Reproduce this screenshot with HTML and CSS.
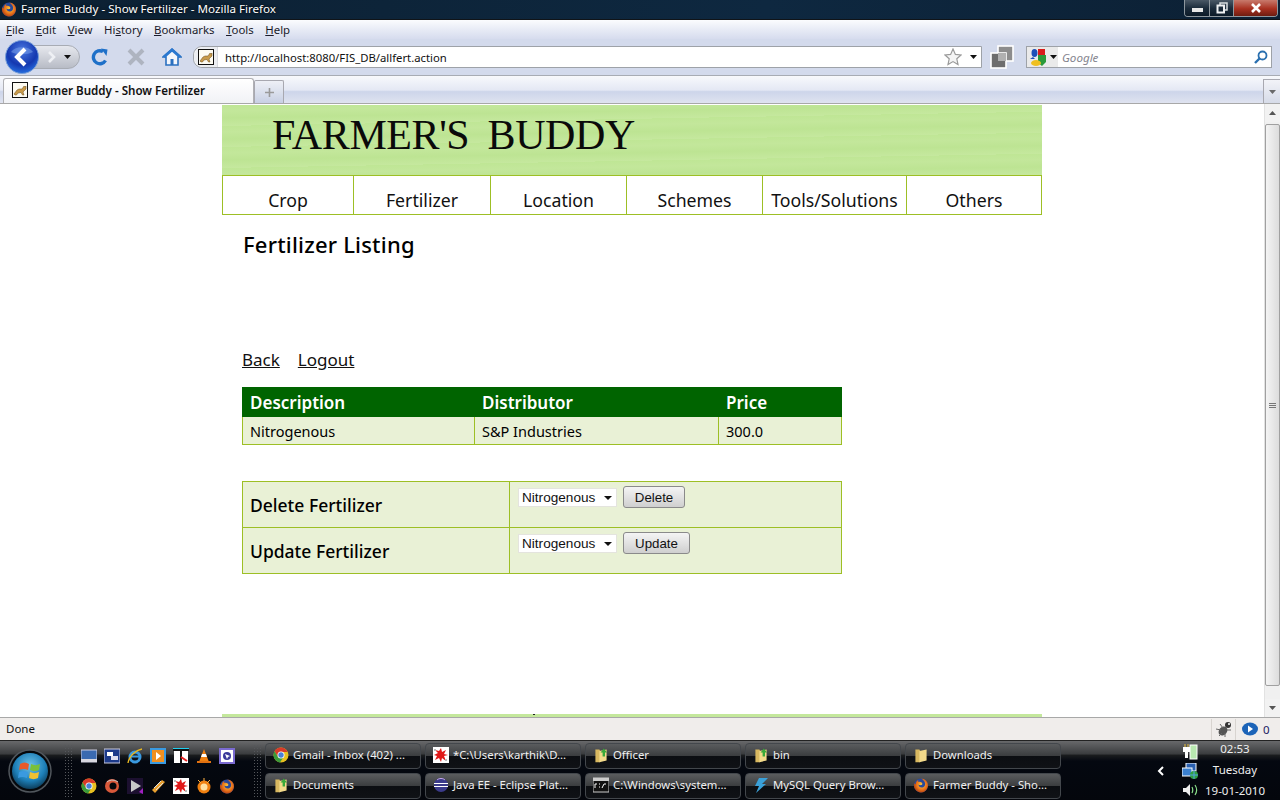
FILE: index.html
```html
<!DOCTYPE html>
<html lang="en">
<head>
<meta charset="utf-8">
<title>Farmer Buddy - Show Fertilizer - Mozilla Firefox</title>
<link rel="stylesheet" href="styles.css">
</head>
<body>
<svg class="defs" width="0" height="0">
  <defs>
    <radialGradient id="fx" cx=".55" cy=".45" r=".6"><stop offset="0" stop-color="#ffd23c"/><stop offset=".6" stop-color="#e8701a"/><stop offset="1" stop-color="#a83a10"/></radialGradient>
    <radialGradient id="orb" cx=".5" cy=".35" r=".7"><stop offset="0" stop-color="#6fc2e8"/><stop offset=".6" stop-color="#1d7fb8"/><stop offset="1" stop-color="#0a3048"/></radialGradient>
    <radialGradient id="backg" cx=".5" cy=".3" r=".75"><stop offset="0" stop-color="#4a78e0"/><stop offset=".6" stop-color="#1438b0"/><stop offset="1" stop-color="#2a78e8"/></radialGradient>
    <symbol id="i-fx" viewBox="0 0 16 16"><circle cx="8" cy="8.5" r="7" fill="#2a4a9a"/><path d="M8 1.5a7 7 0 1 1-6.6 4.6c.3 1 .8 1.3 1.2 1.5C2.600 5 4 3.200 5.500 3c-.5.800-.5 1.500 0 2 1.500-.5 3.500 0 4 2-1 1.500-3 1.500-4 .5 0 2 2 3.500 4 3 2-.5 3-2.500 2.500-4.500C11.500 4 10 2.500 8 1.500z" fill="url(#fx)"/></symbol>
    <symbol id="i-cat" viewBox="0 0 16 16"><rect x=".5" y=".5" width="15" height="15" fill="#fdfbf2" stroke="#111"/><path d="M2 12l3-4 2-1 3 0 2-3 1 1 1-1v3l-2 2-1 1 1 3h-1.500L9 10.500 6 11l-1.500 2H3z" fill="#c89a4a" stroke="#6a4a1a" stroke-width=".5"/></symbol>
    <symbol id="i-folder" viewBox="0 0 16 20"><path d="M1 3h5l1 2v14H1z" fill="#d8b860"/><path d="M6 5l9-2v14l-9 2z" fill="#f2d98a"/><path d="M10 12V7H7.500l4-5 4 5H13v5z" fill="#3aa83a"/></symbol>
    <symbol id="i-folder-plain" viewBox="0 0 16 20"><path d="M1 3h5l1 2v14H1z" fill="#d8b860"/><path d="M6 5l9-2v14l-9 2z" fill="#f2d98a"/></symbol>
    <symbol id="i-chrome" viewBox="0 0 16 16"><circle cx="8" cy="8" r="7.500" fill="#e8c020"/><path d="M8 .5A7.500 7.500 0 0 0 1.500 4.200L5 10 8 5h6.500A7.500 7.500 0 0 0 8 .5z" fill="#d83a2a"/><path d="M1.500 4.200A7.500 7.500 0 0 0 7 15.400L10.500 10H5z" fill="#3a9a3a"/><circle cx="8" cy="8" r="3.500" fill="#fff"/><circle cx="8" cy="8" r="2.700" fill="#4a80d8"/></symbol>
    <symbol id="i-splat" viewBox="0 0 16 16"><rect width="16" height="16" fill="#fff"/><path d="M8 1l1 4 4-2-2 4 4 1-4 1 2 5-4-3-1 4-2-4-4 2 2-4-3-1 4-2-3-3 4 1z" fill="#e01818"/><rect x="1" y="2" width="2" height="2" fill="#bbb"/><rect x="12" y="12" width="2" height="2" fill="#bbb"/></symbol>
  </defs>
</svg>

<div class="app">
  <header class="titlebar">
    <svg class="ico16 title-ico"><use href="#i-fx"/></svg>
    <span class="title-text">Farmer Buddy - Show Fertilizer - Mozilla Firefox</span>
    <div class="winctl">
      <span class="wc wc-min"><i></i></span>
      <span class="wc wc-max"><svg width="12" height="12" viewBox="0 0 12 12"><path d="M4 3V1h7v7H8.500" fill="none" stroke="#d8dde0" stroke-width="1.500"/><rect x="1.500" y="3.500" width="6.500" height="7" fill="none" stroke="#eef0f2" stroke-width="2"/></svg></span>
      <span class="wc wc-close">
        <svg width="12" height="10" viewBox="0 0 12 10"><path d="M2 1l8 8M10 1l-8 8" stroke="#fff" stroke-width="2.600"/></svg>
      </span>
    </div>
  </header>

  <nav class="menubar">
    <span><u>F</u>ile</span><span><u>E</u>dit</span><span><u>V</u>iew</span><span>Hi<u>s</u>tory</span><span><u>B</u>ookmarks</span><span><u>T</u>ools</span><span><u>H</u>elp</span>
  </nav>

  <div class="navbar">
    <div class="backfwd">
      <span class="fwd">
        <svg width="14" height="14" viewBox="0 0 14 14"><path d="M4 2l5 5-5 5" fill="none" stroke="#eef0f4" stroke-width="2.600"/></svg>
        <svg class="caret-sm" width="7" height="4" viewBox="0 0 7 4"><path d="M0 0h7L3.500 4z" fill="#111"/></svg>
      </span>
      <svg class="back" width="34" height="34" viewBox="0 0 34 34">
        <circle cx="17" cy="17" r="16.500" fill="url(#backg)" stroke="#7aa0d8"/>
        <path d="M6 12a12 8 0 0 1 22 0c-6 3-16 3-22 0z" fill="#8ab0f0" opacity=".45"/>
        <path d="M20 9l-8 8 8 8" fill="none" stroke="#fff" stroke-width="4"/>
      </svg>
    </div>
    <svg class="tool-reload" width="18" height="18" viewBox="0 0 18 18"><path d="M14.500 12.500A6.500 6.500 0 1 1 12 3.500" fill="none" stroke="#1e70c8" stroke-width="3.400"/><path d="M10 .5l6.500 1-1 6.500z" fill="#1e70c8"/></svg>
    <svg class="tool-stop" width="18" height="18" viewBox="0 0 18 18"><path d="M2 2l14 14M16 2L2 16" stroke="#aeb4c0" stroke-width="4"/></svg>
    <svg class="tool-home" width="20" height="18" viewBox="0 0 20 18"><path d="M10 1L1 9h3v8h12V9h3z" fill="#f4f6fb" stroke="#2a70c0" stroke-width="1.600"/><path d="M2 9l8-7 8 7" fill="none" stroke="#2a78d0" stroke-width="2.600"/><rect x="8.500" y="11" width="3" height="6" fill="#2a70c0"/></svg>
    <div class="urlbar">
      <span class="url-fav"><svg class="ico16"><use href="#i-cat"/></svg></span>
      <span class="url-text">http://localhost:8080/FIS_DB/allfert.action</span>
      <svg class="star" width="18" height="18" viewBox="0 0 18 18"><path d="M9 1l2.400 5.400 5.600.6-4.200 3.800 1.200 5.700L9 13.600l-5 2.900 1.200-5.700L1 7l5.600-.6z" fill="#f4f4f4" stroke="#9a9a9a" stroke-width="1.200"/></svg>
      <svg class="url-caret" width="7" height="4" viewBox="0 0 7 4"><path d="M0 0h7L3.500 4z" fill="#111"/></svg>
    </div>
    <svg class="copyicon" width="24" height="24" viewBox="0 0 24 24"><rect x="8" y="1" width="15" height="15" fill="#8c8c8c" stroke="#fff" stroke-width="1.600"/><rect x="1" y="8" width="15" height="15" fill="#6e6e6e" stroke="#fff" stroke-width="1.600"/><rect x="8" y="8" width="8" height="8" fill="#b0b0b0"/></svg>
    <div class="searchbar">
      <span class="engine">
        <svg width="17" height="17" viewBox="0 0 17 17"><rect x="8" y="0" width="7" height="6" fill="#d81c1c"/><path d="M8 6h8v7l-4 4-4-3z" fill="#2a9a3a"/><ellipse cx="4.500" cy="4" rx="3" ry="4" fill="#1c50b8"/><ellipse cx="6" cy="14" rx="5" ry="3" fill="#f0c020"/><path d="M0 10l3-2 2 2z" fill="#1c50b8"/></svg>
        <svg width="7" height="4" viewBox="0 0 7 4"><path d="M0 0h7L3.500 4z" fill="#111"/></svg>
      </span>
      <span class="search-text">Google</span>
      <svg class="lens" width="14" height="14" viewBox="0 0 14 14"><circle cx="8.500" cy="5.500" r="4" fill="none" stroke="#2a70b0" stroke-width="1.800"/><path d="M5.500 8.500L1 13" stroke="#2a70b0" stroke-width="2.400"/></svg>
    </div>
  </div>

  <div class="tabbar">
    <div class="tab">
      <svg class="ico16"><use href="#i-cat"/></svg>
      <span>Farmer Buddy - Show Fertilizer</span>
    </div>
    <div class="newtab">
      <svg width="9" height="9" viewBox="0 0 9 9"><path d="M4.500 0v9M0 4.500h9" stroke="#9a9a9a" stroke-width="1.600"/></svg>
    </div>
    <div class="tabspace"></div>
    <div class="tabdrop"><svg width="7" height="4" viewBox="0 0 7 4"><path d="M0 0h7L3.500 4z" fill="#6a6a6a"/></svg></div>
  </div>

  <div class="viewport">
    <main class="page">
      <div class="banner"><span class="brand">Farmer's&nbsp; Buddy</span></div>
      <ul class="sitenav">
        <li class="n1">Crop</li><li class="n2">Fertilizer</li><li class="n3">Location</li><li class="n4">Schemes</li><li class="n5">Tools/Solutions</li><li class="n6">Others</li>
      </ul>
      <div class="content">
        <h1>Fertilizer Listing</h1>
        <p class="links"><a href="#">Back</a><a href="#">Logout</a></p>
        <table class="listing">
          <thead><tr><th class="c1">Description</th><th class="c2">Distributor</th><th>Price</th></tr></thead>
          <tbody><tr><td>Nitrogenous</td><td>S&amp;P Industries</td><td>300.0</td></tr></tbody>
        </table>
        <table class="actions">
          <tr>
            <th>Delete Fertilizer</th>
            <td><div class="formrow"><span class="selwrap"><select><option>Nitrogenous</option></select></span><button type="button" class="btn-del">Delete</button></div></td>
          </tr>
          <tr>
            <th>Update Fertilizer</th>
            <td><div class="formrow"><span class="selwrap"><select><option>Nitrogenous</option></select></span><button type="button" class="btn-upd">Update</button></div></td>
          </tr>
        </table>
      </div>
      <div class="pagefoot"><i></i></div>
    </main>
    <div class="scrollbar">
      <div class="sb-end"><svg width="7" height="4" viewBox="0 0 7 4"><path d="M0 4h7L3.500 0z" fill="#555"/></svg></div>
      <div class="sb-thumb"><i></i><i></i><i></i></div>
      <div class="sb-end"><svg width="7" height="4" viewBox="0 0 7 4"><path d="M0 0h7L3.500 4z" fill="#555"/></svg></div>
    </div>
  </div>

  <footer class="statusbar">
    <span class="status-text">Done</span>
    <div class="st-cell st-bug">
      <svg width="18" height="18" viewBox="0 0 18 18"><ellipse cx="8" cy="11" rx="4" ry="5" fill="#555" transform="rotate(40 8 11)"/><circle cx="13" cy="5" r="3" fill="#333"/><circle cx="14" cy="4" r="1" fill="#fff"/><path d="M1 9l5 1M4 16l3-3M10 17l0-4M5 4l3 4M16 10l-4 0" stroke="#666"/></svg>
    </div>
    <div class="st-cell st-count">
      <svg width="16" height="16" viewBox="0 0 16 16"><ellipse cx="8" cy="8" rx="8" ry="6.500" fill="#1c64b8"/><path d="M6 4.500l5 3.500-5 3.500z" fill="#fff"/></svg>
      <span>0</span>
    </div>
  </footer>

  <div class="taskbar">
    <div class="startwrap">
      <svg width="44" height="44" viewBox="0 0 44 44">
        <circle cx="22" cy="22" r="21" fill="#05080c" stroke="#50565c" stroke-width="1.500"/>
        <circle cx="22" cy="22" r="18" fill="url(#orb)"/>
        <path d="M12 15c3-2 6-2 9 0l-1 6c-3-1.500-6-1.500-9 0z" fill="#e85a2a"/>
        <path d="M23 15c3 1.500 6 1.500 9 0l-1 6c-3 1.500-6 1.500-9 0z" fill="#7ac03a"/>
        <path d="M11 23c3-1.500 6-1.500 9 0l-1 6c-3-1.500-6-1.500-9 0z" fill="#3a9ae0"/>
        <path d="M22 23c3 1.500 6 1.500 9 0l-1 6c-3 1.500-6 1.500-9 0z" fill="#f0c030"/>
      </svg>
    </div>
    <span class="grip"></span>
    <div class="quick">
      <svg class="q" viewBox="0 0 16 16"><rect y="2" width="16" height="12" fill="#3a6ab0" stroke="#ccd"/><rect y="11" width="16" height="3" fill="#d8d8e0"/></svg>
      <svg class="q" viewBox="0 0 16 16"><rect y="1" width="16" height="14" fill="#1c3a8a" stroke="#ccd"/><rect x="3" y="4" width="6" height="4" fill="#fff"/><rect x="7" y="8" width="7" height="4" fill="#dde"/></svg>
      <svg class="q" viewBox="0 0 16 16"><circle cx="8" cy="9" r="5" fill="none" stroke="#3a9ae0" stroke-width="3"/><path d="M4 8.500h9" stroke="#3a9ae0" stroke-width="2"/><path d="M1 15C2 8 9 2 15 1" fill="none" stroke="#e8b820" stroke-width="1.400"/></svg>
      <svg class="q" viewBox="0 0 16 16"><rect width="16" height="16" fill="#3a9ae0"/><rect x="2" y="2" width="12" height="12" fill="#f09020"/><path d="M6 4l5 4-5 4z" fill="#fff"/></svg>
      <svg class="q" viewBox="0 0 16 16"><rect x="1" y="1" width="14" height="14" fill="#fff"/><path d="M0 2h16M8 1v14" stroke="#111" stroke-width="2"/><path d="M0 .5h16" stroke="#20d0f0"/><path d="M8 9l6 4" stroke="#e82020" stroke-width="2"/></svg>
      <svg class="q" viewBox="0 0 16 16"><path d="M8 1l5 13H3z" fill="#f08010"/><path d="M6 6h4l1 3H5z" fill="#fff"/><rect x="1" y="13" width="14" height="2" fill="#e07010"/></svg>
      <svg class="q" viewBox="0 0 16 16"><rect width="16" height="16" fill="#7a6ad0"/><rect x="2" y="2" width="12" height="12" fill="#fff"/><circle cx="8" cy="8" r="4" fill="#3a3a9a"/><path d="M6 6l5 2-2 1-1 2z" fill="#fff"/></svg>
      <svg class="q"><use href="#i-chrome"/></svg>
      <svg class="q" viewBox="0 0 16 16"><circle cx="8" cy="8" r="7" fill="#d8583a"/><circle cx="9" cy="8" r="3.500" fill="#05080c"/><path d="M3 4c4-3 8-2 11 0" stroke="#c8c8c8" fill="none"/></svg>
      <svg class="q" viewBox="0 0 16 16"><rect width="16" height="16" fill="#1c1030"/><path d="M4 2l10 6-10 6z" fill="#c8c8c8"/><path d="M12 14l4-4v6z" fill="#a020c0"/></svg>
      <svg class="q" viewBox="0 0 16 16"><path d="M2 12L12 2l3 2L5 15z" fill="#e8a030"/><path d="M4 10l7-7M6 12l7-7" stroke="#ddd"/></svg>
      <svg class="q"><use href="#i-splat"/></svg>
      <svg class="q" viewBox="0 0 16 16"><circle cx="8" cy="9" r="6.500" fill="#f08010"/><circle cx="8" cy="9" r="3.500" fill="#ffe0a0"/><path d="M2 2l3 3M8 0v3M14 2l-3 3" stroke="#ffb040"/></svg>
      <svg class="q"><use href="#i-fx"/></svg>
    </div>
    <span class="grip"></span>
    <div class="tasks">
      <div class="task"><svg class="ico16"><use href="#i-chrome"/></svg><span>Gmail - Inbox (402) ...</span></div>
      <div class="task"><svg class="ico16"><use href="#i-splat"/></svg><span>*C:\Users\karthik\D...</span></div>
      <div class="task"><svg class="ico16"><use href="#i-folder"/></svg><span>Officer</span></div>
      <div class="task"><svg class="ico16"><use href="#i-folder"/></svg><span>bin</span></div>
      <div class="task"><svg class="ico16"><use href="#i-folder-plain"/></svg><span>Downloads</span></div>
      <div class="task"><svg class="ico16"><use href="#i-folder"/></svg><span>Documents</span></div>
      <div class="task"><svg class="ico16" viewBox="0 0 16 16"><circle cx="8" cy="8" r="7" fill="#3a3a8a"/><path d="M1 6.500h14M1 9.500h14" stroke="#fff" stroke-width="1.200"/><path d="M4 3c2-2 6-2 8 0" stroke="#c8a8e8" fill="none"/></svg><span>Java EE - Eclipse Plat...</span></div>
      <div class="task"><svg class="ico16" viewBox="0 0 16 16"><rect y="1" width="16" height="14" fill="#111" stroke="#ccc"/><rect y="1" width="16" height="3" fill="#ccc"/><path d="M2 11V7h2M6 7h1M6 10h1M9 11l2-4h2" stroke="#fff"/></svg><span>C:\Windows\system...</span></div>
      <div class="task"><svg class="ico16" viewBox="0 0 16 16"><path d="M6 1h9L9 7h4L3 16l3-7H2z" fill="#3aa0d8"/></svg><span>MySQL Query Brow...</span></div>
      <div class="task"><svg class="ico16"><use href="#i-fx"/></svg><span>Farmer Buddy - Sho...</span></div>
    </div>
    <div class="tray">
      <svg class="tray-chev" width="8" height="10" viewBox="0 0 8 10"><path d="M6 1L2 5l4 4" fill="none" stroke="#fff" stroke-width="2"/></svg>
      <div class="tray-icons">
        <svg width="16" height="16" viewBox="0 0 16 16"><rect x="8" y="1" width="7" height="14" fill="#b8e8b0" stroke="#fff"/><path d="M1 3h7v5H6v6H3V8H1z" fill="#fff"/><path d="M3 0v3M6 0v3" stroke="#e8c040"/></svg>
        <svg width="16" height="16" viewBox="0 0 16 16"><rect x="4" y="0" width="10" height="8" fill="#2a60b0" stroke="#fff"/><rect x="0" y="5" width="10" height="8" fill="#3a80d0" stroke="#fff"/><circle cx="12" cy="12" r="4" fill="#30a040"/><path d="M8 12h8M12 8v8" stroke="#50a0e0"/></svg>
        <svg width="16" height="16" viewBox="0 0 16 16"><path d="M1 6h3l4-4v12l-4-4H1z" fill="#eee"/><path d="M10 5c1 2 1 4 0 6M13 3c2 3 2 7 0 10" fill="none" stroke="#8ae08a" stroke-width="1.200"/></svg>
      </div>
      <div class="clock"><span>02:53</span><span>Tuesday</span><span>19-01-2010</span></div>
    </div>
  </div>
</div>
</body>
</html>
```

FILE: styles.css
```css
* { box-sizing: border-box; }
html, body { margin: 0; height: 100%; overflow: hidden; }
body { font-family: "Noto Sans", "Open Sans", sans-serif; color: #000; background: #fff; }
.defs { position: absolute; }
.ico16 { width: 16px; height: 16px; flex: none; display: block; }

.app { width: 1280px; height: 800px; display: flex; flex-direction: column; }

/* window title */
.titlebar { height: 20px; display: flex; align-items: center; padding-left: 1px; padding-bottom: 2px; color: #fff; font-size: 11.6px; background: linear-gradient(90deg, #0c2032 0%, #0e2840 60%, #0c2034 100%); border-bottom: 1px solid #101418; }
.title-ico { margin-right: 4px; }
.title-text { text-shadow: 0 0 3px #000; }
.winctl { margin-left: auto; margin-right: 2px; height: 17px; align-self: flex-start; display: flex; border: 1px solid #8e979e; border-top: 0; border-radius: 0 0 4px 4px; overflow: hidden; }
.wc { display: flex; align-items: center; justify-content: center; height: 16px; background: linear-gradient(#4a5866, #1c2c3c 50%, #0c1a28); }
.wc-min { width: 25px; border-right: 1px solid #8e979e; }
.wc-min i { width: 11px; height: 4px; background: #e8e8e8; margin-top: 4px; }
.wc-max { width: 24px; border-right: 1px solid #8e979e; }
.wc-close { width: 43px; background: linear-gradient(#c87a6c, #a83020 55%, #6e1c10); }

/* menu */
.menubar { height: 19px; display: flex; align-items: center; padding-left: 6px; gap: 11.5px; font-size: 11.4px; color: #1a1a2a; background: linear-gradient(#fbfcfe, #e4e8f4 60%, #d6dcee); }
.menubar span { white-space: nowrap; }

/* nav toolbar */
.navbar { height: 37px; display: flex; align-items: center; padding-left: 5px; background: #d3daec; border-bottom: 1px solid #a8acb4; }
.backfwd { width: 75px; height: 32px; display: flex; align-items: center; position: relative; flex: none; }
.back { position: absolute; left: 0; top: -1px; }
.fwd { margin-left: 17px; width: 58px; height: 24px; border-radius: 0 12px 12px 0; background: linear-gradient(#e6e8ee, #b8bcc6); border: 1px solid #a8acb4; display: flex; align-items: center; padding-left: 22px; gap: 5px; }
.tool-reload { margin-left: 11px; flex: none; }
.tool-stop { margin-left: 18px; flex: none; }
.tool-home { margin-left: 17px; flex: none; }
.urlbar { margin-left: 11px; width: 789px; height: 22px; flex: none; display: flex; align-items: center; background: #fff; border: 1px solid #9ea2a8; border-radius: 9px 0 0 9px; }
.url-fav { width: 24px; height: 20px; display: flex; align-items: center; justify-content: center; background: #eceef2; border-right: 1px solid #d8dae0; border-radius: 9px 0 0 9px; margin-right: 7px; }
.url-text { font-size: 11.3px; color: #111; flex: 1; white-space: nowrap; }
.star { margin-right: 8px; }
.url-caret { margin-right: 4px; }
.copyicon { margin-left: 8px; flex: none; }
.searchbar { margin-left: 12px; width: 246px; height: 22px; flex: none; display: flex; align-items: center; background: #fff; border: 1px solid #9ea2a8; }
.engine { width: 31px; height: 20px; display: flex; align-items: center; gap: 3px; padding-left: 3px; background: #eaeaea; margin-right: 4px; flex: none; }
.search-text { flex: 1; font-size: 11.6px; font-style: italic; color: #85858f; }
.lens { margin-right: 3px; }

/* tabs */
.tabbar { height: 28px; display: flex; align-items: flex-end; padding-left: 3px; background: linear-gradient(#f8f9fc, #e4e8f4 52%, #cdd5ea 58%, #dfe3f0); border-bottom: 1px solid #a8a8a8; }
.tab { width: 251px; height: 25px; display: flex; align-items: center; gap: 4px; padding: 0 0 2px 8px; font-size: 11.6px; font-weight: 600; color: #111; background: linear-gradient(#fff, #f1f2f6); border: 1px solid #b0b0b4; border-bottom: 0; border-radius: 3px 3px 0 0; white-space: nowrap; }
.newtab { width: 30px; height: 23px; display: flex; align-items: center; justify-content: center; background: linear-gradient(#eef0f6, #c8d0e4); border: 1px solid #a8a8b0; border-bottom: 0; border-radius: 2px 2px 0 0; }
.tabspace { flex: 1; }
.tabdrop { width: 17px; height: 24px; display: flex; align-items: center; justify-content: center; background: linear-gradient(#f2f3f8, #d6dbe8); border: 1px solid #a8a8b0; border-width: 1px 0 0 1px; }

/* viewport */
.viewport { height: 614px; display: flex; background: #fff; border-bottom: 1px solid #a8a8a8; overflow: hidden; }
.page { flex: 1; display: flex; flex-direction: column; align-items: center; min-width: 0; padding-top: 1px; }
.banner { width: 820px; height: 70px; flex: none; padding: 5px 0 0 50px; background: repeating-linear-gradient(179deg, #bfe695 0, #c3e79b 6px, #bde493 13px, #c5e89e 21px); }
.brand { font-family: "Liberation Serif", serif; font-size: 42px; line-height: 50px; text-transform: uppercase; letter-spacing: -.4px; word-spacing: -1px; display: block; white-space: nowrap; color: #0a0a0a; }

.sitenav { width: 820px; height: 40px; flex: none; margin: 0; padding: 0; list-style: none; display: flex; border: 1px solid #9dbf25; font-size: 17.7px; }
.sitenav li { display: flex; align-items: flex-end; justify-content: center; padding-bottom: 2px; line-height: 24px; border-right: 1px solid #9dbf25; color: #111; flex: none; }
.sitenav li:last-child { border-right: 0; }
.n1 { width: 131px; } .n2 { width: 137px; } .n3 { width: 136px; } .n4 { width: 136px; } .n5 { width: 144px; } .n6 { width: 134px; }

.content { width: 820px; flex: 1; padding-left: 20px; }
h1 { margin: 14px 0 0 1px; font-size: 22px; line-height: 30px; font-weight: 500; letter-spacing: .2px; }
.links { margin: 88px 0 0; font-size: 17px; line-height: 26px; }
.links a { color: #111; margin-right: 18px; }

table { border-collapse: collapse; width: 600px; table-layout: fixed; }
.listing { margin-top: 14px; }
.listing th { background: #006400; color: #fff; text-align: left; height: 29px; padding: 0 7px; font-size: 17px; font-weight: 600; border: 1px solid #006400; }
.listing th.c1 { width: 232px; }
.listing th.c2 { width: 244px; }
.listing td { height: 28px; padding: 0 7px; font-size: 14.5px; background: #e9f1d6; border: 1px solid #9dbf25; }

.actions { margin-top: 36px; }
.actions th, .actions td { background: #e9f1d6; border: 1px solid #9dbf25; height: 46px; }
.actions th { width: 267px; text-align: left; padding: 0 7px; font-size: 17.5px; font-weight: 500; }
.actions td { padding: 0 8px; vertical-align: top; }
.formrow { display: flex; align-items: center; gap: 6px; padding-top: 4px; }
.selwrap { position: relative; display: block; width: 99px; height: 19px; background: #fff; border: 1px solid #e4e4de; }
.selwrap::after { content: ""; position: absolute; right: 4px; top: 7px; border: 4px solid transparent; border-top: 4px solid #111; border-bottom: 0; }
select { appearance: none; -webkit-appearance: none; width: 100%; height: 100%; border: 0; background: transparent; padding: 0 0 0 3px; font: 13.6px "Liberation Sans", Arial, sans-serif; color: #111; display: block; }
button { height: 22px; padding: 0; font: 13.3px "Liberation Sans", Arial, sans-serif; color: #111; background: linear-gradient(#f4f4f4, #e2e2e2 50%, #cfcfcf); border: 1px solid #8a8a8a; border-radius: 3px; }
.btn-del { width: 62px; }
.btn-upd { width: 67px; }

.pagefoot { width: 820px; height: 3px; flex: none; background: #c4e89c; position: relative; }
.pagefoot i { position: absolute; left: 311px; top: 0; width: 2px; height: 1px; background: #222; }

.scrollbar { width: 16px; flex: none; display: flex; flex-direction: column; background: #f0f0f0; border-left: 1px solid #e2e2e2; }
.sb-end { height: 18px; flex: none; display: flex; align-items: center; justify-content: center; background: #f2f2f2; }
.sb-thumb { margin-top: 2px; margin-bottom: 13px; flex: 1; display: flex; flex-direction: column; gap: 1px; align-items: center; justify-content: center; background: linear-gradient(90deg, #f4f4f4, #dcdcdc); border: 1px solid #a0a0a0; border-radius: 2px; }
.sb-thumb i { width: 7px; height: 1px; background: #777; }

/* status */
.statusbar { height: 22px; display: flex; align-items: center; font-size: 11.5px; color: #111; background: #f0edeb; }
.status-text { margin-left: 6px; flex: 1; padding-bottom: 2px; }
.st-cell { height: 21px; display: flex; align-items: center; border-left: 1px solid #d8d4d0; }
.st-bug { width: 24px; justify-content: center; }
.st-count { width: 45px; padding-left: 6px; gap: 5px; color: #1a1a60; }

/* taskbar */
.taskbar { height: 60px; display: flex; align-items: stretch; color: #eee; background: linear-gradient(#68696b 0, #3a3c3e 22%, #1a1c1e 24%, #040810 34%, #04060c 100%); border-top: 1px solid #222; }
.startwrap { width: 60px; display: flex; align-items: center; justify-content: center; flex: none; padding-top: 1px; }
.grip { width: 8px; margin: 3px 0 3px 4px; flex: none; background-image: radial-gradient(circle, #55575b 1px, transparent 1px); background-size: 3px 3px; }
.quick { width: 167px; margin-left: 5px; margin-right: 5px; flex: none; display: grid; grid-template-columns: repeat(7, 23px); grid-auto-rows: 30px; align-content: center; justify-items: center; align-items: center; }
.q { width: 16px; height: 16px; display: block; }
.tasks { margin-left: 4px; display: grid; grid-template-columns: repeat(5, 156px); grid-auto-rows: 26px; column-gap: 4px; row-gap: 4px; align-content: center; flex: none; }
.task { display: flex; align-items: center; gap: 4px; padding: 0 0 2px 7px; font-size: 11.3px; white-space: nowrap; overflow: hidden; color: #f0f0f0; border: 1px solid #43474c; border-radius: 4px; background: linear-gradient(#5a5c5e 0, #3c3e40 48%, #0c0e12 52%, #101216 100%); }
.tray { margin-left: auto; display: flex; align-items: center; font-size: 11.5px; }
.tray-chev { margin-right: 17px; }
.tray-icons { display: flex; flex-direction: column; gap: 3px; }
.clock { width: 74px; margin-right: 8px; padding-bottom: 2px; display: flex; flex-direction: column; align-items: center; line-height: 21px; white-space: nowrap; }
```
